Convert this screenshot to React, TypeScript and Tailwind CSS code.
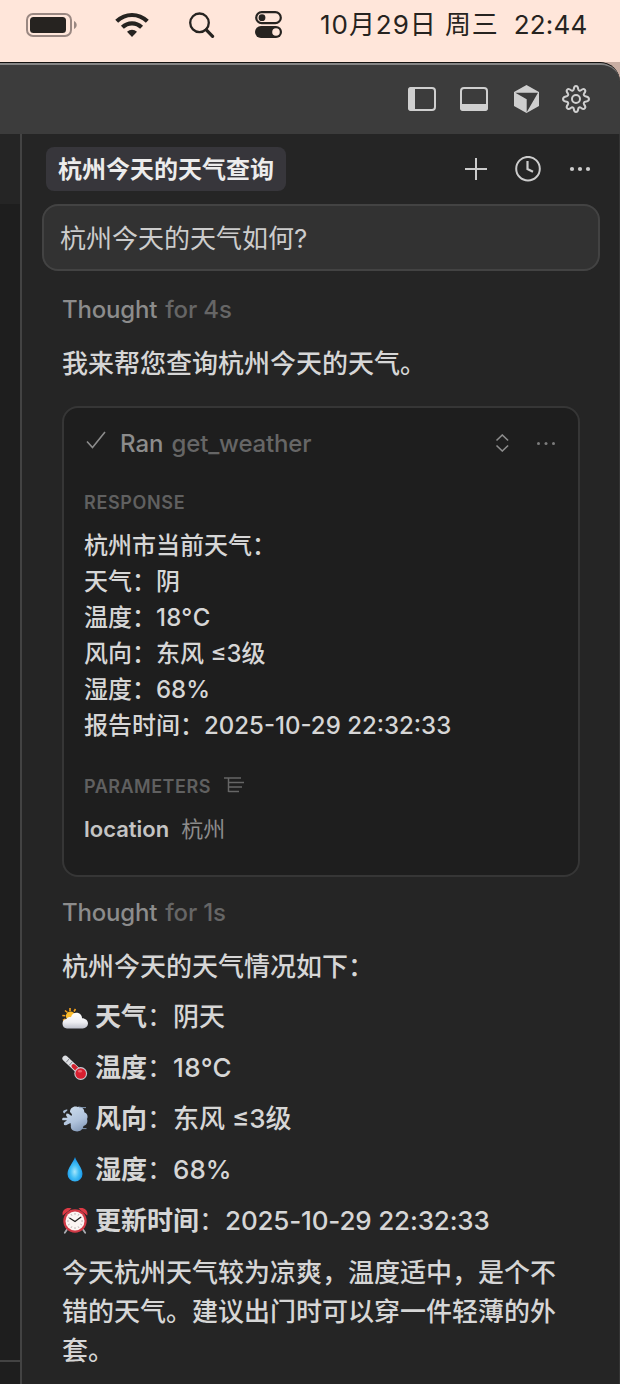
import React from "react";

function Battery() {
  return (
    <svg className="h-6 w-[51px] shrink-0" viewBox="0 0 51 24" fill="none">
      <rect x="1" y="1" width="44" height="22" rx="6" stroke="#9a8882" strokeWidth="2" />
      <rect x="4" y="4" width="36" height="16" rx="3.5" fill="#262320" />
      <path d="M48 8c3.6 1.6 3.6 6.400 0 8Z" fill="#9a8882" />
    </svg>
  );
}

function Wifi() {
  return (
    <svg className="h-[26px] w-[34px] shrink-0" viewBox="0 0 34 26" fill="none">
      <path d="M1.700 9.300C10.500 .9 23.500 .9 32.300 9.300M7.400 15.300c5.500-5.300 13.700-5.300 19.200 0" stroke="#262320" strokeWidth="4.200" />
      <path d="M12 19.800c3-2.700 7-2.700 10 0l-5 5.200Z" fill="#262320" />
    </svg>
  );
}

function Search() {
  return (
    <svg className="h-[26px] w-[26px] shrink-0" viewBox="0 0 26 26" fill="none" stroke="#262320">
      <circle cx="10.500" cy="10.800" r="9.300" strokeWidth="2.300" />
      <path d="M17.300 17.800 23.600 24.300" strokeWidth="3.200" strokeLinecap="round" />
    </svg>
  );
}

function Toggles() {
  return (
    <svg className="h-[28px] w-[28px] shrink-0" viewBox="0 0 28 28" fill="none">
      <rect x="1.200" y="1.200" width="24.600" height="11" rx="5.500" stroke="#262320" strokeWidth="2.200" />
      <circle cx="7" cy="6.700" r="3.400" fill="#262320" />
      <rect x="0" y="15" width="27" height="12" rx="6" fill="#262320" />
      <circle cx="21" cy="21" r="3.800" fill="#ffe6da" />
    </svg>
  );
}

function SidebarIcon() {
  return (
    <svg className="h-6 w-7 shrink-0" viewBox="0 0 28 24" fill="none">
      <rect x="1" y="1" width="26" height="22" rx="3" stroke="#cfcfcf" strokeWidth="2" />
      <path d="M3 0h4v24H3a3 3 0 0 1-3-3V3a3 3 0 0 1 3-3Z" fill="#cfcfcf" />
    </svg>
  );
}

function PanelIcon() {
  return (
    <svg className="h-6 w-7 shrink-0" viewBox="0 0 28 24" fill="none">
      <rect x="1" y="1" width="26" height="22" rx="3" stroke="#cfcfcf" strokeWidth="2" />
      <path d="M0 17h28v4a3 3 0 0 1-3 3H3a3 3 0 0 1-3-3Z" fill="#cfcfcf" />
    </svg>
  );
}

function Cube() {
  return (
    <svg className="h-7 w-[25px] shrink-0" viewBox="0 0 25 28" fill="#cfcfcf">
      <path fillRule="evenodd" d="M12.500 0 25 7v14l-12.500 7L0 21V7ZM1.300 7.700 12.700 14.200V27.200L24 7.700Z" />
    </svg>
  );
}

function Gear() {
  return (
    <svg className="h-7 w-7 shrink-0" viewBox="0 0 28 28" fill="none" stroke="#cfcfcf" strokeWidth="2" strokeLinejoin="round">
      <path d="M11.800 4.200C12 2 12.500 1 14 1s2 1 2.200 3.200c.2 1.300 1.600 1.900 2.700 1.100 1.700-1.400 2.900-1.700 3.900-.7s.7 2.200-.7 3.900c-.8 1.100-.2 2.500 1.100 2.700C26 11.600 27 12.500 27 14s-1 2.400-3.800 2.800c-1.300.2-1.900 1.600-1.100 2.700 1.400 1.700 1.700 2.900.7 3.900s-2.200.7-3.900-.7c-1.100-.8-2.500-.2-2.700 1.100C16 26 15.500 27 14 27s-2-1-2.200-3.200c-.2-1.300-1.600-1.900-2.700-1.100-1.700 1.400-2.900 1.700-3.900.7s-.7-2.200.7-3.900c.8-1.100.2-2.500-1.100-2.700C2 16.400 1 15.500 1 14s1-2.400 3.800-2.800c1.300-.2 1.900-1.600 1.100-2.700-1.400-1.700-1.700-2.900-.7-3.900s2.200-.7 3.900.7c1.100.8 2.500.2 2.700-1.100Z" />
      <circle cx="14" cy="14" r="4" />
    </svg>
  );
}

function CloudSun() {
  return (
    <svg className="h-[26px] w-[26px]" viewBox="0 0 26 26">
      <defs>
        <linearGradient id="cloud" x1="0" y1="0" x2="0" y2="1">
          <stop offset="0" stopColor="#ffffff" />
          <stop offset=".6" stopColor="#eeeef2" />
          <stop offset="1" stopColor="#bfc1cc" />
        </linearGradient>
      </defs>
      <g stroke="#f5a11c" strokeWidth="1.600">
        <path d="M8 4 8 7M3 6.500 5.500 8.500M.3 11.500l3 .3M13.500 5 12 7.500M1 16.500l2.500-1.500" />
      </g>
      <circle cx="8.500" cy="12" r="4.600" fill="#fcbd2d" />
      <path d="M5 24.500a4.800 4.800 0 0 1-.6-9.500c1-2 3-2.500 4.500-1.800C10 9.500 12.800 8.200 15.500 8.800c3 .6 4.600 3.200 4.500 5.400 3.500 0 6 2.400 6 5.200A5.300 5.300 0 0 1 20.700 24.500Z" fill="url(#cloud)" />
    </svg>
  );
}

function Thermometer() {
  return (
    <svg className="h-[26px] w-[26px]" viewBox="0 0 26 26" fill="none" strokeLinecap="round">
      <path d="M3.300 3.500 17 16.500" stroke="#dcdee2" strokeWidth="5.800" />
      <path d="M11.500 11 18 17.500" stroke="#d3202d" strokeWidth="4" />
      <path d="M4.500 7 7 4M7.500 10 10.300 6.800" stroke="#80838b" strokeWidth="1" />
      <circle cx="18.700" cy="18.500" r="6.400" fill="#c9ccd2" />
      <circle cx="18.700" cy="18.500" r="5.300" fill="#d81f30" />
      <ellipse cx="18" cy="16.300" rx="2.200" ry="1.200" fill="#f0606c" />
    </svg>
  );
}

function Wind() {
  return (
    <svg className="h-[26px] w-[26px]" viewBox="0 0 26 26" fill="none">
      <defs>
        <linearGradient id="wind" gradientUnits="userSpaceOnUse" x1="8" y1="1" x2="20" y2="26">
          <stop offset="0" stopColor="#cadaeb" />
          <stop offset=".55" stopColor="#b0c3dc" />
          <stop offset="1" stopColor="#8096b5" />
        </linearGradient>
      </defs>
      <path d="M8 6c0-4 4-6.500 7.500-5C19 .200 22.500 2.500 22.300 6.300c3 1 4 4.200 2.700 6.700 1.200 3-.5 6.300-3.500 7-.8 4.300-5 6.500-8.800 5-2.700-.5-4.400-3-3.800-5.300l-.4-2.700-4.500 2.200-2-.2-.2-2.200 3.200-2.500H.5L0 13l1-1.300h4.500L4 9.300l.5-1.800 2 .3L9.500 10 10 8.300Z" fill="url(#wind)" />
      <path d="M17 1.600h7M18 22.600h6.500" stroke="#8ba1be" strokeWidth=".9" />
      <path d="M2.500 7.500C.5 6.500.7 4.500 2.300 4.200c1.200-.2 2-1 3-.7.6 1.500-1.500 1.500-2.800 4Z" fill="#a9bdd6" />
    </svg>
  );
}

function Droplet() {
  return (
    <svg className="h-[26px] w-[26px]" viewBox="0 0 26 26">
      <defs>
        <radialGradient id="drop" cx=".48" cy=".6" r=".6">
          <stop offset="0" stopColor="#a6e6fb" />
          <stop offset=".45" stopColor="#43bff5" />
          <stop offset="1" stopColor="#0b8be6" />
        </radialGradient>
      </defs>
      <path d="M13 0c1.500 5.500 7.500 10.500 7.500 17a7.500 7.500 0 0 1-15 0C5.500 10.500 11.500 5.500 13 0Z" fill="url(#drop)" />
    </svg>
  );
}

function AlarmClock() {
  return (
    <svg className="h-[26px] w-[26px]" viewBox="0 0 26 26" fill="none">
      <path d="M5 21.500 2.800 24.700M21 21.500l2.200 3.200" stroke="#a9abb0" strokeWidth="1.800" strokeLinecap="round" />
      <path d="M.8 7.500C-.5 3 3.500-1.300 9.500.5ZM25.200 7.500C26.500 3 22.500-1.300 16.500.5Z" fill="#dc3a45" />
      <circle cx="13" cy="13" r="11.700" fill="#d23a46" />
      <circle cx="13" cy="13" r="9.500" fill="#fbf5f3" />
      <path d="M13 5v1.800M13 19.200v1.800M5 13h1.800M19.200 13H21M9 6.100l.9 1.500M17 6.100l-.9 1.500M6.100 9l1.500.9M19.900 9l-1.500.9M6.100 17l1.500-.9M19.900 17l-1.500-.9M9 19.900l.9-1.500M17 19.900l-.9-1.500" stroke="#a79b9a" strokeWidth=".8" />
      <path d="M7.500 10 13 13.500l6-4.500" stroke="#24211f" strokeWidth="1.200" />
    </svg>
  );
}

function Fact({ icon, label, children }: { icon: React.ReactNode; label: string; children: React.ReactNode }) {
  return (
    <div className="flex h-[51px] items-center whitespace-pre text-[26px] leading-[39px]">
      <span className="mr-[7px] flex w-[26px] shrink-0">{icon}</span>
      <strong className="font-bold">{label}</strong>
      <span className="font-normal">：</span>
      {children}
    </div>
  );
}

function Thought({ time }: { time: string }) {
  return (
    <div className="flex h-9 items-center gap-2 text-[24px] leading-9 tracking-[-0.17px]">
      <span className="text-[#8c8c8c]">Thought</span>
      <span className="text-[#666666]">for {time}</span>
    </div>
  );
}

export default function App() {
  return (
    <div className="flex h-[1384px] w-[620px] flex-col overflow-hidden bg-[#c9aea3] font-['Inter','Noto_Sans_CJK_SC',sans-serif] font-[450] text-[#d6d6d6]">
      <header className="flex h-[62px] shrink-0 items-start bg-[#ffe6da] text-[#262320]">
        <div className="flex h-[49px] items-center pl-[26px]">
          <Battery />
          <div className="ml-[38px] flex"><Wifi /></div>
          <div className="ml-[40px] flex"><Search /></div>
          <div className="ml-[40px] flex"><Toggles /></div>
          <div className="ml-[37px] flex whitespace-pre text-[26px] leading-[48px] font-normal">
            <span className="tracking-[0.95px]">10月29日 周三</span>
            <span className="ml-[15px] tracking-[0.15px]">22:44</span>
          </div>
        </div>
      </header>

      <div className="flex min-h-0 flex-1 flex-col overflow-hidden rounded-tr-[20px] border-t border-[#141210] bg-[#252525]">
        <div className="flex h-[71px] shrink-0 items-center justify-end rounded-tr-[19px] border-t-2 border-[#858585] bg-[#3c3c3c] pr-[30px] pb-0.5">
          <SidebarIcon />
          <div className="ml-6 flex"><PanelIcon /></div>
          <div className="ml-[26px] flex"><Cube /></div>
          <div className="ml-[23px] flex"><Gear /></div>
        </div>

        <div className="flex min-h-0 flex-1">
          <aside className="flex w-5 shrink-0 flex-col bg-[#1e1e1e]">
            <div className="h-[70px] bg-[#252525]" />
            <div className="h-[1158px] border-b-2 border-[#434343]" />
          </aside>
          <main className="flex min-w-0 flex-1 flex-col border-l-2 border-r border-l-[#434343] border-r-[#343434] pr-[19px] pl-5">
            <div className="flex h-[70px] shrink-0 items-center justify-between pl-1 pr-2">
              <div className="flex h-11 w-[240px] items-center justify-center rounded-lg bg-[#37363b] pt-0.5 text-[24px] font-bold text-[#ececec]">
                杭州今天的天气查询
              </div>
              <div className="flex items-center">
                <svg className="h-[22px] w-[22px]" viewBox="0 0 22 22" stroke="#cccccc" strokeWidth="2"><path d="M11 0v22M0 11h22" /></svg>
                <svg className="ml-7 h-[26px] w-[26px]" viewBox="0 0 26 26" fill="none" stroke="#cccccc" strokeWidth="2"><circle cx="13" cy="12.700" r="11.800" /><path d="M12.500 5v8l5.500 2.700" strokeWidth="2.200" /></svg>
                <svg className="ml-[27px] h-[22px] w-[24px]" viewBox="0 0 24 22" fill="#cccccc"><circle cx="4" cy="11" r="2.100" /><circle cx="12" cy="11" r="2.100" /><circle cx="20" cy="11" r="2.100" /></svg>
              </div>
            </div>

            <div className="flex h-[67px] shrink-0 items-center rounded-[16px] border-2 border-[#434343] bg-[#323232] pl-4 pt-0.5 text-[26px] leading-[39px] font-normal text-[#cccccc]">
              杭州今天的天气如何?
            </div>

            <div className="flex flex-col px-5 pt-[21px]">
              <Thought time="4s" />
              <p className="mt-4 h-[39px] whitespace-nowrap text-[26px] leading-[39px]">我来帮您查询杭州今天的天气。</p>

              <section className="mt-[23px] flex h-[471px] shrink-0 flex-col rounded-[16px] border-2 border-[#363636] bg-[#1e1e1e] px-5">
                <div className="mt-[18px] flex h-9 items-center text-[24px] leading-9">
                  <svg className="mr-[13px] mb-2 ml-0.5 h-[18px] w-[21px]" viewBox="0 0 21 18" fill="none" stroke="#8c8c8c" strokeWidth="1.600"><path d="M1 10.500 6.500 16.500 19 1" /></svg>
                  <span className="text-[#8c8c8c]">Ran</span>
                  <span className="ml-2 tracking-[-0.17px] text-[#666666]">get_weather</span>
                  <div className="ml-auto flex items-center pb-0.5">
                    <svg className="h-[18px] w-[14px]" viewBox="0 0 14 18" fill="none" stroke="#8c8c8c" strokeWidth="1.600"><path d="M1.500 6.500 7.300 1l5.800 5.500M1.500 11.500 7.300 17l5.800-5.500" /></svg>
                    <svg className="ml-[27px] h-[18px] w-[22px]" viewBox="0 0 22 18" fill="#7c7c7c"><circle cx="2.500" cy="9.500" r="1.500" /><circle cx="10" cy="9.500" r="1.500" /><circle cx="17.500" cy="9.500" r="1.500" /></svg>
                  </div>
                </div>
                <h2 className="mt-[27px] h-7 text-[18px] leading-7 font-semibold tracking-[0.65px] text-[#606060]">RESPONSE</h2>
                <div className="mt-[11px] whitespace-pre text-[24px] leading-9">
                  <p>杭州市当前天气：</p>
                  <p>天气：阴</p>
                  <p>温度：<span className="tracking-[0.3px]">18°C</span></p>
                  <p>风向：东风 ≤3级</p>
                  <p>湿度：68%</p>
                  <p>报告时间：2025-10-29 22:32:33</p>
                </div>
                <div className="mt-[29px] flex h-7 items-center">
                  <h2 className="text-[18px] leading-7 font-semibold tracking-[0.5px] text-[#606060]">PARAMETERS</h2>
                  <svg className="ml-[13px] mb-1 h-[18px] w-5" viewBox="0 0 20 18" fill="none" stroke="#666666" strokeWidth="1.500"><path d="M0 2h17M4.500 2v14M4.500 6.500H20M4.500 11H18M4.500 15.500H15" /></svg>
                </div>
                <div className="mt-[10px] flex h-9 items-center text-[22px] leading-9">
                  <span className="font-semibold text-[#c4c4c4]">location</span>
                  <span className="ml-3 font-normal text-[#8c8c8c]">杭州</span>
                </div>
              </section>

              <div className="mt-[18px]"><Thought time="1s" /></div>
              <p className="mt-4 h-[39px] whitespace-nowrap text-[26px] leading-[39px]">杭州今天的天气情况如下：</p>
              <div className="mt-[5px]">
                <Fact icon={<CloudSun />} label="天气">阴天</Fact>
                <Fact icon={<Thermometer />} label="温度"><span className="tracking-[0.4px]">18°C</span></Fact>
                <Fact icon={<Wind />} label="风向">东风 ≤3级</Fact>
                <Fact icon={<Droplet />} label="湿度">68%</Fact>
                <Fact icon={<AlarmClock />} label="更新时间"><span className="tracking-[-0.17px]">2025-10-29 22:32:33</span></Fact>
              </div>
              <p className="mt-[7px] w-[500px] text-[26px] leading-[39px]">
                今天杭州天气较为凉爽，温度适中，是个不错的天气。建议出门时可以穿一件轻薄的外套。
              </p>
            </div>
          </main>
        </div>
      </div>
    </div>
  );
}
